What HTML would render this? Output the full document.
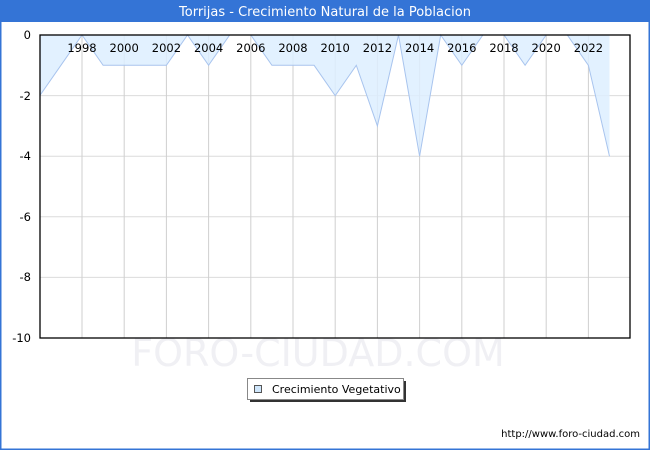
<!DOCTYPE html>
<html><head><style>
html,body{margin:0;padding:0;background:#fff;}
body{width:650px;height:450px;overflow:hidden;position:relative;font-family:"DejaVu Sans","Liberation Sans",sans-serif;}
</style></head><body>
<svg width="650" height="450" xmlns="http://www.w3.org/2000/svg" style="position:absolute;left:0;top:0">
<rect x="0" y="0" width="650" height="450" fill="#fff"/>
<rect x="0.75" y="0.75" width="648.5" height="448.5" fill="none" stroke="#3474d6" stroke-width="1.5"/>
<rect x="0" y="0" width="650" height="22" fill="#3474d6"/>
<text x="325" y="16" text-anchor="middle" font-size="13" fill="#fff">Torrijas - Crecimiento Natural de la Poblacion</text>
<text x="318" y="366" text-anchor="middle" font-size="38" fill="#f0f0f4" font-family="DejaVu Sans,sans-serif">FORO-CIUDAD.COM</text>
<g stroke="#dcdcdc" stroke-width="1">
<line x1="40" y1="95.6" x2="630" y2="95.6"/><line x1="40" y1="156.2" x2="630" y2="156.2"/>
<line x1="40" y1="216.8" x2="630" y2="216.8"/><line x1="40" y1="277.4" x2="630" y2="277.4"/>
</g>
<g stroke="#cfcfcf" stroke-width="1">
<line x1="82" y1="35" x2="82" y2="338"/><line x1="124.2" y1="35" x2="124.2" y2="338"/><line x1="166.4" y1="35" x2="166.4" y2="338"/><line x1="208.6" y1="35" x2="208.6" y2="338"/><line x1="250.8" y1="35" x2="250.8" y2="338"/><line x1="293" y1="35" x2="293" y2="338"/><line x1="335.2" y1="35" x2="335.2" y2="338"/><line x1="377.4" y1="35" x2="377.4" y2="338"/><line x1="419.6" y1="35" x2="419.6" y2="338"/><line x1="461.8" y1="35" x2="461.8" y2="338"/><line x1="504" y1="35" x2="504" y2="338"/><line x1="546.2" y1="35" x2="546.2" y2="338"/><line x1="588.4" y1="35" x2="588.4" y2="338"/>
</g>
<polygon fill="#ddeeff" fill-opacity="0.85" points="39.8,35 39.8,95.6 60.9,65.3 82,35 103.1,65.3 124.2,65.3 145.3,65.3 166.4,65.3 187.5,35 208.6,65.3 229.7,35 250.8,35 271.9,65.3 293,65.3 314.1,65.3 335.2,95.6 356.3,65.3 377.4,125.9 398.5,35 419.6,156.2 440.7,35 461.8,65.3 482.9,35 504,35 525.1,65.3 546.2,35 567.3,35 588.4,65.3 609.5,156.2 609.5,35"/>
<polyline fill="none" stroke="#a8c4ee" stroke-width="1" points="39.8,95.6 60.9,65.3 82,35 103.1,65.3 124.2,65.3 145.3,65.3 166.4,65.3 187.5,35 208.6,65.3 229.7,35 250.8,35 271.9,65.3 293,65.3 314.1,65.3 335.2,95.6 356.3,65.3 377.4,125.9 398.5,35 419.6,156.2 440.7,35 461.8,65.3 482.9,35 504,35 525.1,65.3 546.2,35 567.3,35 588.4,65.3 609.5,156.2"/>
<rect x="40" y="35" width="590" height="303" fill="none" stroke="#000" stroke-width="1.3"/>
<g font-size="11.5" fill="#000" text-anchor="middle">
<text x="82" y="52">1998</text><text x="124.2" y="52">2000</text><text x="166.4" y="52">2002</text><text x="208.6" y="52">2004</text><text x="250.8" y="52">2006</text><text x="293" y="52">2008</text><text x="335.2" y="52">2010</text><text x="377.4" y="52">2012</text><text x="419.6" y="52">2014</text><text x="461.8" y="52">2016</text><text x="504" y="52">2018</text><text x="546.2" y="52">2020</text><text x="588.4" y="52">2022</text>
</g>
<g font-size="11.5" fill="#000" text-anchor="end">
<text x="31" y="39">0</text><text x="31" y="100">-2</text><text x="31" y="160">-4</text><text x="31" y="221">-6</text><text x="31" y="281">-8</text><text x="31" y="342">-10</text>
</g>
<rect x="250" y="381" width="156" height="21" fill="#333"/>
<rect x="247.5" y="378.5" width="156" height="21" fill="#fff" stroke="#888" stroke-width="1"/>
<rect x="254.5" y="385.5" width="7" height="7" fill="#cfe6fb" stroke="#555" stroke-width="1"/>
<text x="272" y="393" font-size="11" fill="#000">Crecimiento Vegetativo</text>
<text x="640" y="437" font-size="10" fill="#000" text-anchor="end">http://www.foro-ciudad.com</text>
</svg>
</body></html>
